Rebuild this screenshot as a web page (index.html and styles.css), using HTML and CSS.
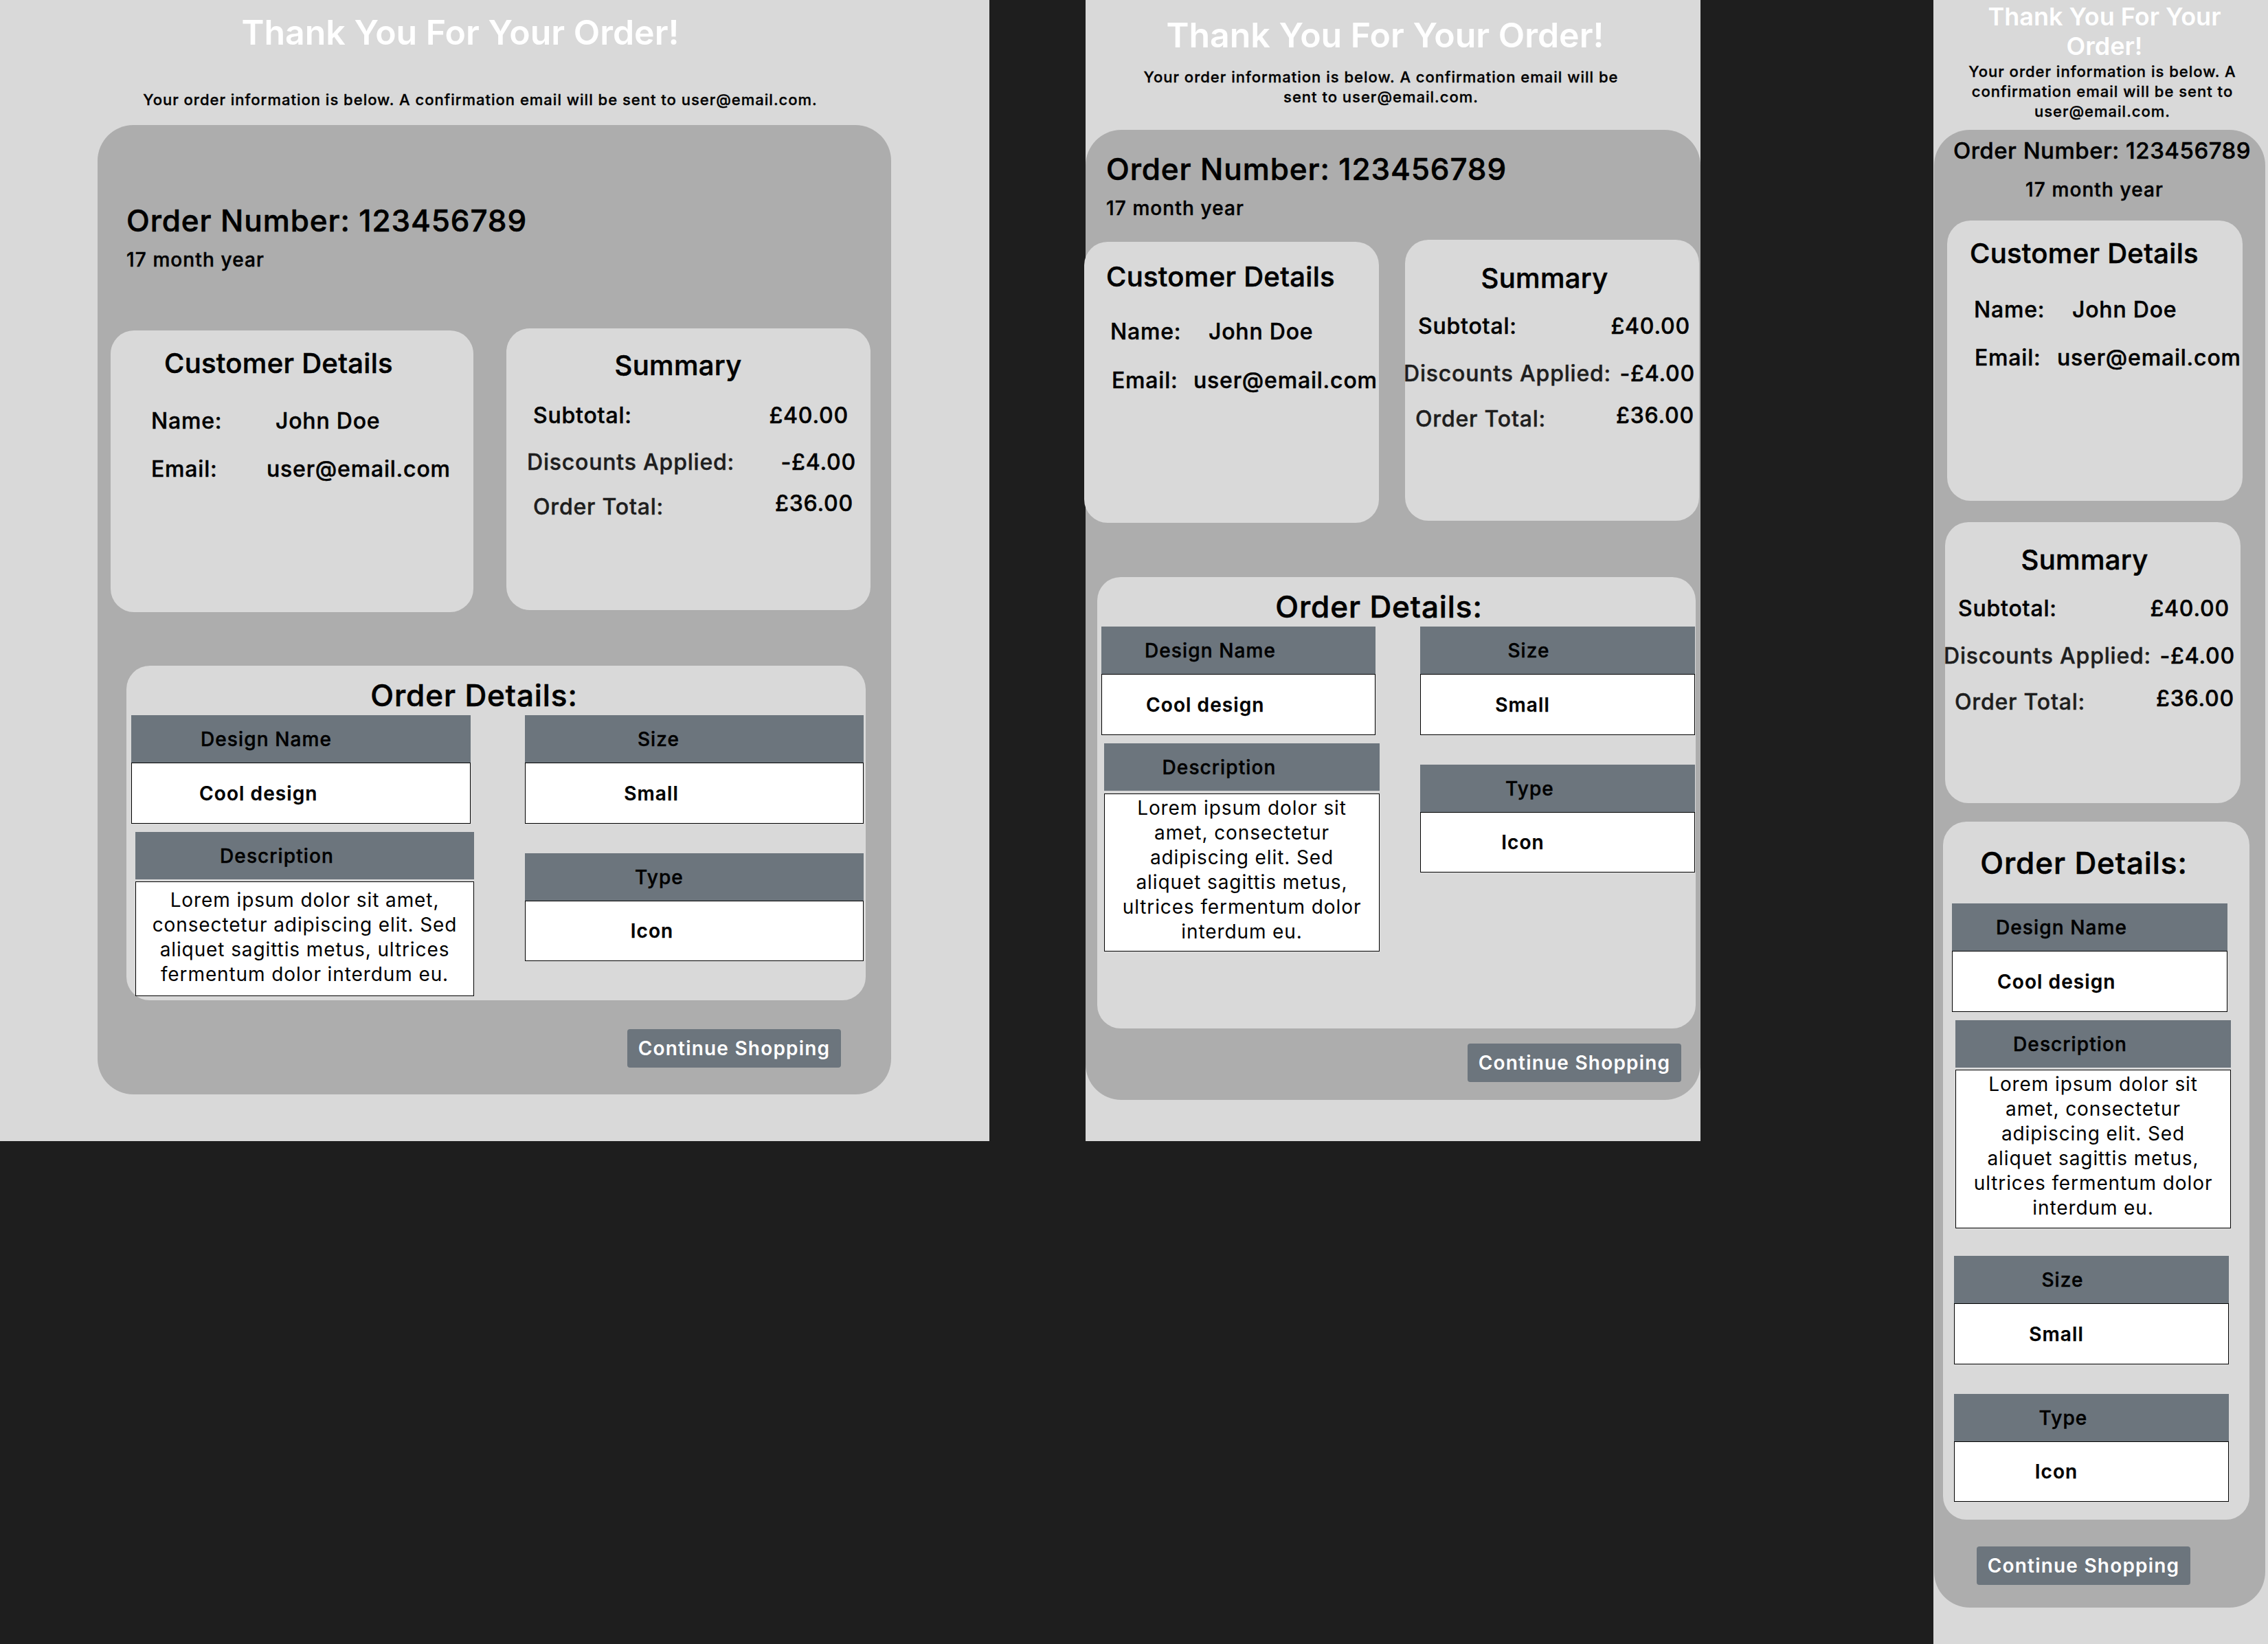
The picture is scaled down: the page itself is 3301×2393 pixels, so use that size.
FILE: index.html
```html
<!DOCTYPE html>
<html lang="en">
  <head>
    <meta charset="UTF-8" />
    <meta name="viewport" content="width=device-width, initial-scale=1.0" />
    <title>Order Confirmation</title>
    <link rel="stylesheet" href="styles.css">
  </head>
  <body>
    <!-- desktop -->
    <div class="frame desk">
      <h1 class="title">Thank You For Your Order!</h1>
      <p class="lead">Your order information is below. A confirmation email will be sent to user@email.com.</p>
      <div class="card">
        <h2 class="order-no">Order Number: 123456789</h2>
        <p class="order-date">17 month year</p>
        <div class="boxes">
          <section class="box customer">
            <h3 class="box-title">Customer Details</h3>
            <div class="info-row name"><span class="info-label">Name:</span><span>John Doe</span></div>
            <div class="info-row email"><span class="info-label">Email:</span><span>user@email.com</span></div>
          </section>
          <section class="box summary">
            <h3 class="box-title">Summary</h3>
            <div class="sum-row subtotal"><span>Subtotal:</span><span>£40.00</span></div>
            <div class="sum-row discount"><span class="muted">Discounts Applied:</span><span>-£4.00</span></div>
            <div class="sum-row total"><span class="muted">Order Total:</span><span class="sum-val">£36.00</span></div>
          </section>
        </div>
        <section class="details">
          <h3 class="details-title">Order Details:</h3>
          <div class="cols">
            <div class="col col-left">
              <div class="tbl t-design"><div class="th">Design Name</div><div class="td">Cool design</div></div>
              <div class="tbl t-desc"><div class="th">Description</div><div class="td">Lorem ipsum dolor sit amet, consectetur adipiscing elit. Sed aliquet sagittis metus, ultrices fermentum dolor interdum eu.</div></div>
            </div>
            <div class="col col-right">
              <div class="tbl t-size"><div class="th">Size</div><div class="td">Small</div></div>
              <div class="tbl t-type"><div class="th">Type</div><div class="td">Icon</div></div>
            </div>
          </div>
        </section>
        <a class="btn" href="#">Continue Shopping</a>
      </div>
    </div>

    <!-- tablet -->
    <div class="frame tab">
      <h1 class="title">Thank You For Your Order!</h1>
      <p class="lead">Your order information is below. A confirmation email will be sent to user@email.com.</p>
      <div class="card">
        <h2 class="order-no">Order Number: 123456789</h2>
        <p class="order-date">17 month year</p>
        <div class="boxes">
          <section class="box customer">
            <h3 class="box-title">Customer Details</h3>
            <div class="info-row name"><span class="info-label">Name:</span><span>John Doe</span></div>
            <div class="info-row email"><span class="info-label">Email:</span><span>user@email.com</span></div>
          </section>
          <section class="box summary">
            <h3 class="box-title">Summary</h3>
            <div class="sum-row subtotal"><span>Subtotal:</span><span>£40.00</span></div>
            <div class="sum-row discount"><span class="muted">Discounts Applied:</span><span>-£4.00</span></div>
            <div class="sum-row total"><span class="muted">Order Total:</span><span class="sum-val">£36.00</span></div>
          </section>
        </div>
        <section class="details">
          <h3 class="details-title">Order Details:</h3>
          <div class="cols">
            <div class="col col-left">
              <div class="tbl t-design"><div class="th">Design Name</div><div class="td">Cool design</div></div>
              <div class="tbl t-desc"><div class="th">Description</div><div class="td">Lorem ipsum dolor sit amet, consectetur adipiscing elit. Sed aliquet sagittis metus, ultrices fermentum dolor interdum eu.</div></div>
            </div>
            <div class="col col-right">
              <div class="tbl t-size"><div class="th">Size</div><div class="td">Small</div></div>
              <div class="tbl t-type"><div class="th">Type</div><div class="td">Icon</div></div>
            </div>
          </div>
        </section>
        <a class="btn" href="#">Continue Shopping</a>
      </div>
    </div>

    <!-- mobile -->
    <div class="frame mob">
      <h1 class="title">Thank You For Your Order!</h1>
      <p class="lead">Your order information is below. A confirmation email will be sent to user@email.com.</p>
      <div class="card">
        <h2 class="order-no">Order Number: 123456789</h2>
        <p class="order-date">17 month year</p>
        <div class="boxes">
          <section class="box customer">
            <h3 class="box-title">Customer Details</h3>
            <div class="info-row name"><span class="info-label">Name:</span><span>John Doe</span></div>
            <div class="info-row email"><span class="info-label">Email:</span><span>user@email.com</span></div>
          </section>
          <section class="box summary">
            <h3 class="box-title">Summary</h3>
            <div class="sum-row subtotal"><span>Subtotal:</span><span>£40.00</span></div>
            <div class="sum-row discount"><span class="muted">Discounts Applied:</span><span>-£4.00</span></div>
            <div class="sum-row total"><span class="muted">Order Total:</span><span class="sum-val">£36.00</span></div>
          </section>
        </div>
        <section class="details">
          <h3 class="details-title">Order Details:</h3>
          <div class="cols">
            <div class="col col-left">
              <div class="tbl t-design"><div class="th">Design Name</div><div class="td">Cool design</div></div>
              <div class="tbl t-desc"><div class="th">Description</div><div class="td">Lorem ipsum dolor sit amet, consectetur adipiscing elit. Sed aliquet sagittis metus, ultrices fermentum dolor interdum eu.</div></div>
            </div>
            <div class="col col-right">
              <div class="tbl t-size"><div class="th">Size</div><div class="td">Small</div></div>
              <div class="tbl t-type"><div class="th">Type</div><div class="td">Icon</div></div>
            </div>
          </div>
        </section>
        <a class="btn" href="#">Continue Shopping</a>
      </div>
    </div>
  </body>
</html>
```

FILE: styles.css
```css
* {
  margin: 0;
  padding: 0;
  box-sizing: border-box;
}
body {
  width: 3301px;
  height: 2393px;
  overflow: hidden;
  display: flex;
  align-items: flex-start;
  background-color: #1e1e1e;
  font-family: Inter, "Noto Sans", sans-serif;
  color: #000;
}
a {
  text-decoration: none;
}

/* shared */
.frame {
  flex-shrink: 0;
  background-color: #d9d9d9;
}
.title {
  color: #fff;
  font-weight: 600;
  line-height: 60px;
  text-align: center;
}
/* medium text: a thin stroke to get the figma weight */
.lead,
.order-no,
.order-date,
.box-title,
.info-row,
.sum-row,
.details-title,
.th {
  font-weight: 500;
  -webkit-text-stroke: 0.45px currentColor;
}
.lead {
  font-size: 22px;
  line-height: 29px;
  letter-spacing: 1px;
  -webkit-text-stroke-width: 0.35px;
  text-align: center;
}
.card {
  display: flex;
  flex-direction: column;
  align-items: flex-start;
  background-color: #adadad;
  border-radius: 52px;
}
.order-no {
  letter-spacing: 0.9px;
  -webkit-text-stroke-width: 0.6px;
}
.order-date {
  font-size: 28px;
  line-height: 34px;
  letter-spacing: 1.1px;
}
.boxes {
  display: flex;
  align-items: flex-start;
}
.box {
  flex-shrink: 0;
  background-color: #d9d9d9;
  border-radius: 34px;
}
.box-title {
  font-size: 40px;
  line-height: 48px;
  letter-spacing: 0.3px;
  -webkit-text-stroke-width: 0.55px;
}
.summary .box-title {
  text-align: center;
}
.info-row {
  display: flex;
  font-size: 32px;
  line-height: 38px;
  letter-spacing: 0.8px;
}
.sum-row {
  display: flex;
  justify-content: space-between;
  align-items: flex-start;
  font-size: 32px;
  line-height: 38px;
  letter-spacing: 0.8px;
}
.muted {
  color: #1e1e1e;
}
.total .sum-val {
  margin-top: -5px;
}
.details {
  background-color: #d9d9d9;
  border-radius: 34px;
}
.details-title {
  font-size: 44px;
  line-height: 53px;
  letter-spacing: 0.9px;
  -webkit-text-stroke-width: 0.6px;
  text-align: center;
}
.cols {
  display: flex;
}
.col {
  display: flex;
  flex-direction: column;
  align-items: flex-start;
}
.th {
  height: 69px;
  display: flex;
  align-items: center;
  justify-content: center;
  background-color: #6c757d;
  font-size: 28px;
  letter-spacing: 1.1px;
}
.td {
  height: 89px;
  display: flex;
  align-items: center;
  justify-content: center;
  background-color: #fff;
  border: 1px solid #000;
  font-size: 28px;
  font-weight: 600;
  letter-spacing: 1.1px;
  -webkit-text-stroke: 0.25px #000;
}
.t-design .th,
.t-design .td {
  justify-content: flex-start;
}
.t-desc .td {
  display: block;
  font-weight: 400;
  line-height: 36px;
  letter-spacing: 0.9px;
  -webkit-text-stroke: 0;
  text-align: center;
}
.t-type .td {
  height: 88px;
}
.btn {
  display: block;
  width: 311px;
  height: 56px;
  line-height: 56px;
  background-color: #6c757d;
  border-radius: 4px;
  color: #fff;
  font-size: 28px;
  font-weight: 600;
  letter-spacing: 1.2px;
  text-align: center;
}

/* desktop */
.desk {
  width: 1440px;
  height: 1661px;
  padding-top: 17px;
}
.desk .title {
  font-size: 50px;
  padding-right: 100px;
}
.desk .lead {
  margin-top: 54px;
  padding-right: 42px;
  white-space: nowrap;
}
.desk .card {
  width: 1155px;
  margin: 22px 0 0 142px;
  padding: 113px 0 39px;
}
.desk .order-no {
  font-size: 44px;
  line-height: 53px;
  margin-left: 42px;
}
.desk .order-date {
  margin: 13px 0 0 42px;
}
.desk .boxes {
  margin: 83px 0 0 19px;
  gap: 48px;
}
.desk .customer {
  width: 528px;
  height: 410px;
  margin-top: 3px;
  padding-top: 24px;
}
.desk .customer .box-title {
  margin-left: 78px;
}
.desk .info-row {
  padding-left: 59px;
}
.desk .name {
  margin-top: 41px;
}
.desk .email {
  margin-top: 32px;
}
.desk .name .info-label {
  width: 181px;
}
.desk .email .info-label {
  width: 168px;
}
.desk .summary {
  width: 530px;
  height: 410px;
  padding-top: 30px;
}
.desk .summary .box-title {
  padding-right: 30px;
}
.desk .subtotal {
  margin-top: 30px;
  padding: 0 32px 0 39px;
}
.desk .discount {
  margin-top: 30px;
  padding: 0 21px 0 30px;
}
.desk .total {
  margin-top: 27px;
  padding: 0 25px 0 39px;
}
.desk .details {
  width: 1076px;
  margin: 78px 0 0 42px;
  padding: 17px 0 6px;
}
.desk .details-title {
  padding-right: 64px;
}
.desk .cols {
  margin-top: 2px;
}
.desk .col-left {
  width: 506px;
}
.desk .col-right {
  margin-left: 74px;
}
.desk .t-design {
  width: 494px;
  margin-left: 7px;
}
.desk .t-design .th {
  padding-left: 101px;
}
.desk .t-design .td {
  padding-left: 98px;
}
.desk .t-desc {
  width: 493px;
  margin: 12px 0 0 13px;
}
.desk .t-desc .th {
  padding-right: 81px;
}
.desk .t-desc .td {
  height: 167px;
  margin-top: 3px;
  padding: 8px 8px 0;
}
.desk .t-size,
.desk .t-type {
  width: 493px;
}
.desk .t-type {
  margin-top: 43px;
}
.desk .t-size .th {
  padding-right: 104px;
}
.desk .t-size .td {
  padding-right: 125px;
}
.desk .t-type .th {
  padding-right: 102px;
}
.desk .t-type .td {
  padding-right: 123px;
}
.desk .btn {
  align-self: flex-end;
  margin: 42px 73px 0 0;
}

/* tablet */
.tab {
  width: 895px;
  height: 1661px;
  margin-left: 140px;
  padding-top: 21px;
}
.tab .title {
  font-size: 50px;
  padding-right: 23px;
}
.tab .lead {
  width: 720px;
  margin: 17px 0 0 70px;
}
.tab .card {
  width: 895px;
  margin-top: 33px;
  padding: 31px 0 26px;
}
.tab .order-no {
  font-size: 44px;
  line-height: 53px;
  margin-left: 30px;
}
.tab .order-date {
  margin: 13px 0 0 30px;
}
.tab .boxes {
  margin: 29px 0 0 -2px;
  gap: 38px;
}
.tab .customer {
  width: 429px;
  height: 409px;
  margin-top: 3px;
  padding-top: 27px;
}
.tab .customer .box-title {
  margin-left: 32px;
}
.tab .name {
  margin-top: 37px;
  padding-left: 38px;
}
.tab .email {
  margin-top: 33px;
  padding-left: 40px;
}
.tab .name .info-label {
  width: 143px;
}
.tab .email .info-label {
  width: 119px;
}
.tab .summary {
  width: 428px;
  height: 409px;
  padding-top: 32px;
}
.tab .summary .box-title {
  padding-right: 22px;
}
.tab .subtotal {
  margin-top: 27px;
  padding: 0 13px 0 19px;
}
.tab .discount {
  margin: 31px 0 0 -2px;
  padding-right: 6px;
}
.tab .total {
  margin-top: 28px;
  padding: 0 7px 0 15px;
}
.tab .details {
  width: 871px;
  margin: 79px 0 0 17px;
  padding: 17px 0 112px;
}
.tab .details-title {
  padding-right: 51px;
}
.tab .cols {
  margin-top: 2px;
}
.tab .col-left {
  width: 411px;
}
.tab .col-right {
  margin-left: 59px;
}
.tab .t-design {
  width: 399px;
  margin-left: 6px;
}
.tab .t-design .th {
  padding-left: 63px;
}
.tab .t-design .td {
  padding-left: 64px;
}
.tab .t-desc {
  width: 401px;
  margin: 12px 0 0 10px;
}
.tab .t-desc .th {
  padding-right: 66px;
}
.tab .t-desc .td {
  height: 230px;
  margin-top: 4px;
  padding: 2px 21px 0;
}
.tab .t-size,
.tab .t-type {
  width: 400px;
}
.tab .t-type {
  margin-top: 43px;
}
.tab .t-size .th {
  padding-right: 84px;
}
.tab .t-size .td {
  padding-right: 102px;
}
.tab .t-type .th {
  padding-right: 81px;
}
.tab .t-type .td {
  padding-right: 101px;
}
.tab .btn {
  align-self: flex-end;
  margin: 22px 28px 0 0;
}

/* mobile */
.mob {
  width: 487px;
  height: 2393px;
  margin-left: 339px;
  padding-top: 3px;
}
.mob .title {
  width: 400px;
  margin-left: 49px;
  font-size: 36px;
  line-height: 43px;
}
.mob .lead {
  width: 404px;
  margin: 1px 0 0 44px;
}
.mob .card {
  width: 482px;
  margin: 12px 0 0 1px;
  padding: 10px 0 33px;
}
.mob .order-no {
  align-self: stretch;
  padding-left: 7px;
  font-size: 33px;
  line-height: 40px;
  letter-spacing: 0.5px;
  -webkit-text-stroke-width: 0.45px;
  text-align: center;
}
.mob .order-date {
  align-self: stretch;
  margin-top: 20px;
  padding-right: 15px;
  text-align: center;
}
.mob .boxes {
  flex-direction: column;
  margin-top: 28px;
  gap: 31px;
}
.mob .customer {
  width: 430px;
  height: 408px;
  margin-left: 19px;
  padding-top: 24px;
}
.mob .customer .box-title {
  margin-left: 33px;
}
.mob .name {
  margin-top: 39px;
  padding-left: 39px;
}
.mob .email {
  margin-top: 32px;
  padding-left: 40px;
}
.mob .name .info-label {
  width: 143px;
}
.mob .email .info-label {
  width: 120px;
}
.mob .summary {
  width: 430px;
  height: 409px;
  margin-left: 16px;
  padding-top: 31px;
}
.mob .summary .box-title {
  padding-right: 24px;
}
.mob .subtotal {
  margin-top: 28px;
  padding: 0 16px 0 19px;
}
.mob .discount {
  margin: 31px 0 0 -2px;
  padding-right: 8px;
}
.mob .total {
  margin-top: 29px;
  padding: 0 9px 0 14px;
}
.mob .details {
  width: 446px;
  margin: 27px 0 0 13px;
  padding: 34px 0 26px;
}
.mob .details-title {
  padding-right: 36px;
}
.mob .cols {
  flex-direction: column;
  margin-top: 32px;
}
.mob .t-design {
  width: 401px;
  margin-left: 13px;
}
.mob .t-design .th {
  padding-left: 64px;
}
.mob .t-design .td {
  padding-left: 65px;
}
.mob .t-desc {
  width: 401px;
  margin: 12px 0 0 18px;
}
.mob .t-desc .th {
  padding-right: 67px;
}
.mob .t-desc .td {
  height: 231px;
  margin-top: 3px;
  padding: 2px 21px 0;
}
.mob .t-size,
.mob .t-type {
  width: 400px;
  margin-left: 16px;
}
.mob .t-size {
  margin-top: 40px;
}
.mob .t-type {
  margin-top: 43px;
}
.mob .t-size .th {
  padding-right: 84px;
}
.mob .t-size .td {
  padding-right: 102px;
}
.mob .t-type .th {
  padding-right: 82px;
}
.mob .t-type .td {
  padding-right: 102px;
}
.mob .btn {
  margin: 39px 0 0 62px;
}
```
